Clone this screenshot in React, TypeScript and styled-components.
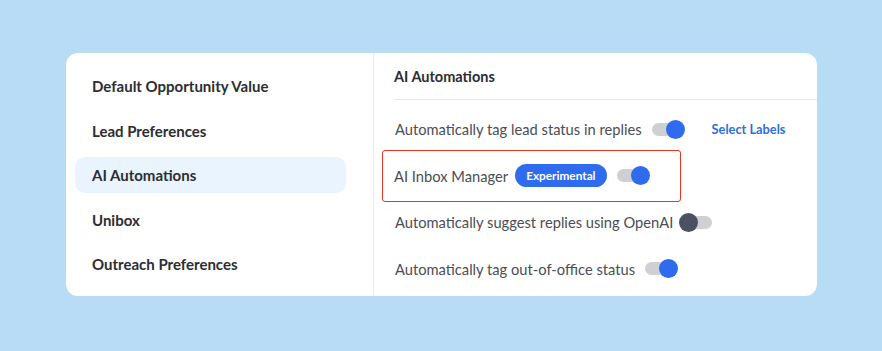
import styled, { createGlobalStyle } from 'styled-components';

const GlobalStyle = createGlobalStyle`
  html, body {
    margin: 0;
    padding: 0;
    background: #b8dcf5;
  }
  body {
    font-family: Lato, 'Open Sans', sans-serif;
    -webkit-font-smoothing: antialiased;
  }
`;

const Page = styled.div`
  width: 882px;
  height: 351px;
  box-sizing: border-box;
  padding: 53px 65px 55px 66px;
`;

const Card = styled.div`
  display: flex;
  height: 100%;
  background: #ffffff;
  border-radius: 12px;
  overflow: hidden;
`;

const Sidebar = styled.nav`
  width: 308px;
  flex-shrink: 0;
  box-sizing: border-box;
  padding: 15px 27px 14px 9px;
  display: flex;
  flex-direction: column;
  gap: 8.5px;
  border-right: 1px solid #ececef;
`;

const NavItem = styled.div<{ $active?: boolean }>`
  height: 36px;
  display: flex;
  align-items: center;
  padding-left: 17px;
  border-radius: 10px;
  background: ${(p) => (p.$active ? '#e9f4fe' : 'transparent')};
  font-size: 15px;
  font-weight: 700;
  color: #2b2d33;
`;

const Content = styled.section`
  flex: 1;
  display: flex;
  flex-direction: column;
`;

const Header = styled.div`
  height: 46px;
  margin-left: 20px;
  display: flex;
  align-items: center;
  border-bottom: 1px solid #e6e7ea;
  font-size: 14.5px;
  font-weight: 700;
  color: #2b2d33;
`;

const Rows = styled.div`
  padding: 6px 0 0 21px;
  display: flex;
  flex-direction: column;
`;

const Row = styled.div`
  height: 46.5px;
  display: flex;
  align-items: center;
`;

const Highlight = styled.div`
  height: 52px;
  box-sizing: border-box;
  margin: -3px 0 -2.5px -13px;
  padding: 0 31px 0 11px;
  align-self: flex-start;
  display: flex;
  align-items: center;
  border: 1.5px solid #ea3323;
  border-radius: 3px;
`;

const Label = styled.span`
  font-size: 14.7px;
  color: #4a4d55;
`;

const Badge = styled.span`
  margin-left: 7px;
  height: 23px;
  padding: 0 11px;
  display: inline-flex;
  align-items: center;
  border-radius: 12px;
  background: #2f6bef;
  color: #ffffff;
  font-size: 11.8px;
  font-weight: 700;
`;

const Track = styled.span<{ $on: boolean }>`
  position: relative;
  margin-left: ${(p) => (p.$on ? '10px' : '7px')};
  width: 32px;
  height: 13px;
  border-radius: 7px;
  background: #cfd0d3;
`;

const Knob = styled.span<{ $on: boolean }>`
  position: absolute;
  top: 50%;
  ${(p) => (p.$on ? 'right: -1px;' : 'left: -1px;')}
  width: 19px;
  height: 19px;
  margin-top: -9.5px;
  border-radius: 50%;
  background: ${(p) => (p.$on ? '#2f6bef' : '#4b5163')};
`;

const LinkButton = styled.a`
  margin-left: 28px;
  font-size: 12.8px;
  font-weight: 700;
  color: #2f6fd8;
  cursor: pointer;
`;

const Toggle = ({ on }: { on: boolean }) => (
  <Track $on={on}>
    <Knob $on={on} />
  </Track>
);

const navItems = [
  'Default Opportunity Value',
  'Lead Preferences',
  'AI Automations',
  'Unibox',
  'Outreach Preferences',
];

const App = () => (
  <>
    <GlobalStyle />
    <Page>
      <Card>
        <Sidebar>
          {navItems.map((item) => (
            <NavItem key={item} $active={item === 'AI Automations'}>
              {item}
            </NavItem>
          ))}
        </Sidebar>
        <Content>
          <Header>AI Automations</Header>
          <Rows>
            <Row>
              <Label>Automatically tag lead status in replies</Label>
              <Toggle on />
              <LinkButton>Select Labels</LinkButton>
            </Row>
            <Row>
              <Highlight>
                <Label>AI Inbox Manager</Label>
                <Badge>Experimental</Badge>
                <Toggle on />
              </Highlight>
            </Row>
            <Row>
              <Label>Automatically suggest replies using OpenAI</Label>
              <Toggle on={false} />
            </Row>
            <Row>
              <Label>Automatically tag out-of-office status</Label>
              <Toggle on />
            </Row>
          </Rows>
        </Content>
      </Card>
    </Page>
  </>
);

export default App;
